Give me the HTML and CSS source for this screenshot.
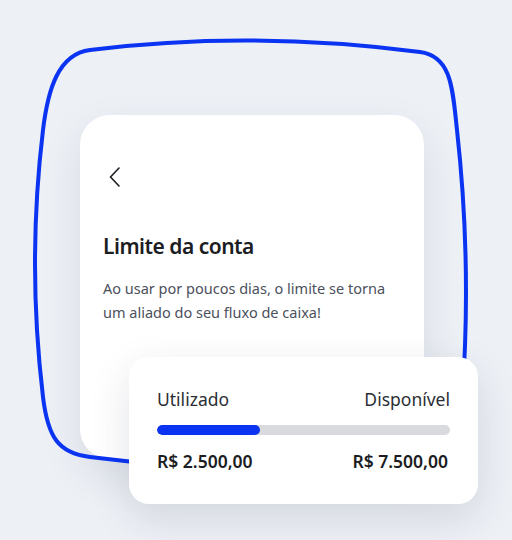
FILE: index.html
```html
<!DOCTYPE html>
<html lang="pt-BR">
<head>
  <meta charset="UTF-8">
  <meta name="viewport" content="width=device-width, initial-scale=1.0">
  <title>Limite da conta</title>
  <link rel="stylesheet" href="styles.css">
</head>
<body>

  <div class="stage">
    <svg class="outline" width="512" height="540" viewBox="0 0 512 540">
      <path d="M90 50 Q250 30 420 52 C452 56 452.6 90 457 130 Q472 265 462 400 C458 440 440 468 400 470 Q250 477 90 457 C58 453 47.8 437 43 397 Q27 263 43 130 C47.8 90 58 54 90 50 Z"
            fill="none" stroke="#0a33f2" stroke-width="4"/>
    </svg>

    <div class="screen-card">
      <svg class="back-icon" width="12" height="20" viewBox="0 0 12 20">
        <path d="M10 1 L1.5 10 L10 19" fill="none" stroke="#1b1d22" stroke-width="1.6" stroke-linecap="round" stroke-linejoin="round"/>
      </svg>
      <h2>Limite da conta</h2>
      <p>Ao usar por poucos dias, o limite se torna um aliado do seu fluxo de caixa!</p>
    </div>

    <div class="limit-card">
      <div class="row labels">
        <span>Utilizado</span>
        <span>Disponível</span>
      </div>
      <div class="bar">
        <div class="bar-fill" style="width: 35%"></div>
      </div>
      <div class="row values">
        <span>R$ 2.500,00</span>
        <span>R$ 7.500,00</span>
      </div>
    </div>
  </div>

</body>
</html>
```

FILE: styles.css
```css
body {
  margin: 0;
  background-color: #edf0f5;
  font-family: "Noto Sans", Arial, sans-serif;
  color: #1b1d22;
}
.stage {
  position: relative;
  width: 512px;
  height: 540px;
  padding: 115px 0 0 80px;
  box-sizing: border-box;
  overflow: hidden;
}
.outline {
  position: absolute;
  left: 0;
  top: 0;
  z-index: 1;
}
.screen-card {
  width: 344px;
  height: 344px;
  padding: 52px 23px 0;
  box-sizing: border-box;
  background-color: #ffffff;
  border-radius: 30px;
  box-shadow: 0 16px 40px rgba(40, 50, 80, 0.10);
}
.back-icon {
  display: block;
  margin-left: 6px;
}
.screen-card h2 {
  margin: 44px 0 0;
  font-size: 21px;
  font-weight: 600;
  line-height: 30px;
  letter-spacing: -0.5px;
}
.screen-card p {
  margin: 15px 0 0;
  font-size: 14.5px;
  line-height: 24px;
  color: #4b505c;
}
.limit-card {
  position: absolute;
  left: 129px;
  top: 357px;
  z-index: 2;
  width: 349px;
  height: 147px;
  padding: 30px 28px 0;
  box-sizing: border-box;
  background-color: #ffffff;
  border-radius: 20px;
  box-shadow: 0 14px 40px rgba(40, 50, 80, 0.13);
}
.row {
  display: flex;
  justify-content: space-between;
}
.labels {
  font-size: 17.5px;
  line-height: 24px;
  color: #2b2e35;
}
.bar {
  height: 10px;
  margin-top: 14px;
  background-color: #d9dadd;
  border-radius: 5px;
  overflow: hidden;
}
.bar-fill {
  height: 100%;
  background-color: #0a33f2;
  border-radius: 5px;
}
.values {
  margin-top: 14px;
  padding-right: 2px;
  font-size: 17.5px;
  font-weight: 600;
  line-height: 24px;
}
```
